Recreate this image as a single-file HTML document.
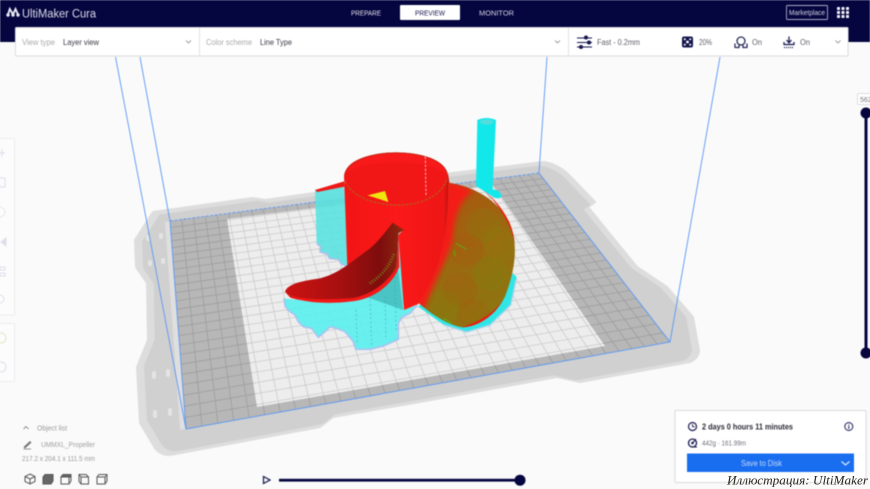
<!DOCTYPE html>
<html><head><meta charset="utf-8"><title>UltiMaker Cura</title>
<style>
html,body{margin:0;padding:0;background:#fafafa;width:870px;height:489px;overflow:hidden}
svg{display:block;font-family:"Liberation Sans",sans-serif}
#main{filter:blur(.4px)}
</style></head><body>
<svg xmlns="http://www.w3.org/2000/svg" width="870" height="489" viewBox="0 0 870 489">
<defs>
<linearGradient id="bl" gradientUnits="userSpaceOnUse" x1="520" y1="300" x2="700" y2="560"><stop offset="0" stop-color="#a85a10"/><stop offset=".5" stop-color="#9a6a10"/><stop offset="1" stop-color="#8f7410"/></linearGradient>
<linearGradient id="ld" x1="0" y1="0" x2="1" y2="0"><stop offset="0" stop-color="#cc1212"/><stop offset=".45" stop-color="#a81010"/><stop offset=".8" stop-color="#7e0d0d"/><stop offset="1" stop-color="#8f2a10"/></linearGradient>
<linearGradient id="cyl" x1="0" y1="0" x2="1" y2="0"><stop offset="0" stop-color="#f21515"/><stop offset=".5" stop-color="#fb1919"/><stop offset=".95" stop-color="#ee1616"/><stop offset="1" stop-color="#b51010"/></linearGradient>
<clipPath id="bc"><path d="M535,218 C610,228 680,270 715,330 C745,390 740,470 705,560 C680,610 630,650 580,652 C555,652 495,625 445,578 C500,500 535,420 535,218Z"/></clipPath>
<filter id="sf" x="-20%" y="-20%" width="140%" height="140%"><feGaussianBlur stdDeviation="7"/></filter>
</defs>
<g id="main">
<rect width="870" height="489" fill="#fafafa"/>
<!-- bed -->
<path d="M153,212 L253,198 L265,200 L453,173 L543,162 Q555,163 567,173 L595,202 L588,207 L637,267 L667,287 L693,317 L699,350 Q699,358 690,362 L580,382 L557,377 L420,402 L333,417 L320,427 L170,455 Q160,455 155,448 L140,423 L137,367 L148,340 L147,283 L136,267 L135,240 Z" fill="#dddddd" stroke="#dddddd" stroke-width="2" stroke-linejoin="round"/>
<path transform="translate(417,310) scale(.975) translate(-417,-310)" d="M153,212 L253,198 L265,200 L453,173 L543,162 Q555,163 567,173 L595,202 L588,207 L637,267 L667,287 L693,317 L699,350 Q699,358 690,362 L580,382 L557,377 L420,402 L333,417 L320,427 L170,455 Q160,455 155,448 L140,423 L137,367 L148,340 L147,283 L136,267 L135,240 Z" fill="#d0d0d0"/>
<polygon points="165,222 170,221 186,429 180,430" fill="#dfdfdf"/>
<g fill="#e4e4e4"><rect x="152" y="371" width="4" height="8" rx="2"/><rect x="166" y="369" width="4" height="8" rx="2"/><rect x="153" y="410" width="4" height="8" rx="2"/><rect x="168" y="408" width="4" height="8" rx="2"/><rect x="146" y="235" width="4" height="6" rx="2"/><rect x="159" y="233" width="4" height="6" rx="2"/><rect x="148" y="260" width="4" height="6" rx="2"/><rect x="161" y="258" width="4" height="6" rx="2"/></g>
<polygon points="170,221 539,173 670,342 186,429" fill="#b7b7b7"/>
<polygon points="227,219 493,185 605,346 257,407" fill="#ededed"/>
<path id="grid" d="" fill="none" stroke="#000" stroke-opacity=".14" stroke-width=".8"/>
<g fill="none" stroke="#5a97f5" stroke-width=".9">
<path d="M170,221 L539,173" stroke-dasharray="3 1.500"/>
<path d="M539,173 L670,342 L186,429 L170,221"/>
<path d="M115.500,57 L186,429 M140,57 L170,221 M547,57 L539,173 M720,57 L670,342"/>
</g>
<!-- model -->
<g transform="translate(270,110) scale(.3333)">
<path d="M622,30 Q650,18 678,30 L668,238 Q690,240 695,258 Q690,270 672,262 L618,228Z" fill="#12e8ea"/>
<ellipse cx="650" cy="36" rx="20" ry="8" fill="#55dddd"/>
<path d="M135,240 L222,222 L235,470 L215,462 L205,448 L178,445 L172,432 L150,425 L152,410 L140,400Z" fill="#58e2e0" fill-opacity=".88"/>
<path d="M140,400 L152,410 L150,425 L172,432 L178,445 L205,448 L215,462 L235,470" fill="none" stroke="#a8c0ee" stroke-width="5" stroke-linejoin="round"/>
<path d="M135,240 L222,214 L224,230 L142,246Z" fill="#ef1616"/>
<path d="M42,565 L46,590 L60,605 L75,615 L85,635 L100,650 L125,655 L145,682 L165,665 L180,650 L200,655 L225,665 L250,695 L258,718 L300,718 L340,708 L385,688 L385,640 L395,622 L420,610 L442,585 L400,600 L400,365 L385,370 L380,470 L300,550 L200,575 L100,572Z" fill="#55f0ee" fill-opacity=".88"/>
<path d="M42,565 L46,590 L60,605 L75,615 L85,635 L100,650 L125,655 L145,682 L165,665 L180,650 L200,655 L225,665 L250,695 L258,718 L300,718 L340,708 L385,688 L385,640 L395,622 L420,610 L442,585" fill="none" stroke="#a8c4f0" stroke-width="5" stroke-linejoin="round"/>
<path d="M280,558 L385,480 L400,600 Z" fill="#45bcbc" fill-opacity=".85"/>
<path d="M258,600 L262,700 M300,570 L305,705 M345,560 L348,690 M375,500 L378,660" stroke="#3fa8a8" stroke-width="2" stroke-dasharray="5 8" fill="none"/>
<path d="M445,590 L520,644 L590,666 L660,645 L722,585 L740,500 L600,400Z" fill="#2fe6e6"/>
<path d="M520,644 L590,666 L660,645 L722,585 L738,510" fill="none" stroke="#a8d0ee" stroke-width="5" stroke-dasharray="8 3"/>
<!-- cylinder -->
<path d="M222,195 L232,470 L400,360 L385,375 L402,600 L445,582 C500,500 535,420 538,218 L535,195Z" fill="url(#cyl)"/>
<ellipse cx="378" cy="205" rx="155" ry="78" fill="#f21717"/>
<path d="M222,200 C225,150 300,128 378,128 C460,128 530,150 535,200 C520,172 460,158 378,158 C300,158 235,172 222,200Z" fill="#f81a1a"/>
<path d="M225,215 C250,265 320,285 385,285 C450,285 515,260 532,205" fill="none" stroke="#8a8a18" stroke-width="3" stroke-dasharray="8 4" stroke-opacity=".75"/>
<path d="M224,195 C235,150 310,128 378,128 C450,128 525,150 533,195" fill="none" stroke="#a8280f" stroke-width="2"/>
<polygon points="293,256 345,243 355,276" fill="#efe60e"/>
<path d="M466,140 L468,260" stroke="#ffd0d0" stroke-width="2.500" stroke-dasharray="7 5"/>
<!-- right blade -->
<path d="M535,218 C610,228 680,270 715,330 C745,390 740,470 705,560 C680,610 630,650 580,652 C555,652 495,625 445,578 C500,500 535,420 535,218Z" fill="url(#bl)"/>
<g id="moire" clip-path="url(#bc)" fill="none"></g>
<g clip-path="url(#bc)"><path d="M530,215 C565,222 590,232 610,245 C570,265 552,320 548,390 C530,450 490,520 462,600 L430,590 Z" fill="#f41a12" filter="url(#sf)"/></g>
<path d="M640,240 C690,280 725,330 735,400 C720,340 690,285 640,240Z M700,570 C670,620 625,650 575,652 C630,635 670,610 700,570Z" fill="#ee1a10"/>
<path d="M552,420 L556,440 M557,400 L590,418 M520,625 L545,640" stroke="#32e010" stroke-width="2" stroke-opacity=".8" fill="none"/>
<!-- left blade -->
<path d="M45,545 C52,525 80,515 150,505 C210,490 250,450 300,415 C330,390 350,360 368,338 L402,360 L385,370 L380,470 C360,510 320,550 260,568 C190,582 90,575 60,562Z" fill="url(#ld)"/>
<path d="M45,545 C60,568 150,572 250,564 C310,552 360,510 380,470 L385,370 L388,470 C370,520 320,560 260,572 C190,584 70,582 45,545Z" fill="#f31717"/>
<path d="M300,520 C330,500 360,470 372,430" fill="none" stroke="#7d7a16" stroke-width="9" stroke-dasharray="3 5"/>
</g>

<!-- header -->
<rect width="870" height="42" fill="#05053f"/>
<g stroke="#e8e8f2" stroke-width="1.900" fill="none"><path d="M8,14.500 L9.800,9 L13,14.500 L15.500,9 L18,14.500"/></g>
<g fill="#e8e8f2"><circle cx="8" cy="15" r="1.700"/><circle cx="13" cy="15" r="1.700"/><circle cx="18" cy="15" r="1.700"/></g>
<text x="22" y="17.500" font-size="11.500" fill="#dcdcea" textLength="74" lengthAdjust="spacingAndGlyphs">UltiMaker Cura</text>
<text x="351" y="15.500" font-size="7.500" fill="#e3e3ee" textLength="30" lengthAdjust="spacingAndGlyphs">PREPARE</text>
<rect x="400" y="5" width="60" height="15" rx="1" fill="#fff"/>
<text x="415" y="15.500" font-size="7.500" fill="#15154e" textLength="30" lengthAdjust="spacingAndGlyphs">PREVIEW</text>
<text x="479" y="15.500" font-size="7.500" fill="#d5d5e5" textLength="35" lengthAdjust="spacingAndGlyphs">MONITOR</text>
<rect x="786.500" y="5.500" width="41" height="14" rx="1" fill="none" stroke="#a9a9c6" stroke-width=".9"/>
<text x="789" y="15" font-size="7.500" fill="#d5d5e5" textLength="36" lengthAdjust="spacingAndGlyphs">Marketplace</text>
<g fill="#f2f2f8"><rect x="837" y="7" width="3" height="3" rx=".6"/><rect x="841.500" y="7" width="3" height="3" rx=".6"/><rect x="846" y="7" width="3" height="3" rx=".6"/><rect x="837" y="11" width="3" height="3" rx=".6"/><rect x="841.500" y="11" width="3" height="3" rx=".6"/><rect x="846" y="11" width="3" height="3" rx=".6"/><rect x="837" y="15" width="3" height="3" rx=".6"/><rect x="841.500" y="15" width="3" height="3" rx=".6"/><rect x="846" y="15" width="3" height="3" rx=".6"/></g>

<!-- settings bar -->
<rect x="15.500" y="27.500" width="832.500" height="28.500" rx="1" fill="#fff" stroke="#dcdcdc"/>
<path d="M199.500,28 V56 M568.500,28 V56" stroke="#e2e2e2"/>
<text x="22" y="45" font-size="8" fill="#a8a8a8" textLength="33" lengthAdjust="spacingAndGlyphs">View type</text>
<text x="63" y="45" font-size="8" fill="#3a3a46" textLength="36" lengthAdjust="spacingAndGlyphs">Layer view</text>
<path d="M186,40.500 L188.500,43 L191,40.500" fill="none" stroke="#9a9a9a" stroke-width=".9"/>
<text x="206" y="45" font-size="8" fill="#a8a8a8" textLength="46" lengthAdjust="spacingAndGlyphs">Color scheme</text>
<text x="260" y="45" font-size="8" fill="#3a3a46" textLength="32" lengthAdjust="spacingAndGlyphs">Line Type</text>
<path d="M555,40.500 L557.500,43 L560,40.500" fill="none" stroke="#9a9a9a" stroke-width=".9"/>
<g fill="#15154e" stroke="#15154e">
<path d="M577,38 H592 M577,42.500 H592 M577,47 H592" stroke-width="1" fill="none"/>
<circle cx="586" cy="37.500" r="1.500"/><circle cx="589" cy="42.500" r="1.500"/><circle cx="581" cy="47" r="1.500"/>
</g>
<text x="597" y="45" font-size="8" fill="#5f5f69" textLength="43" lengthAdjust="spacingAndGlyphs">Fast - 0.2mm</text>
<rect x="682" y="36.500" width="11" height="11" rx="2" fill="#14144c"/>
<g fill="#fff"><circle cx="687.500" cy="42" r="1.400"/><circle cx="684.800" cy="39.300" r="1"/><circle cx="690.200" cy="39.300" r="1"/><circle cx="684.800" cy="44.700" r="1"/><circle cx="690.200" cy="44.700" r="1"/></g>
<text x="699" y="45" font-size="8" fill="#5f5f69" textLength="13" lengthAdjust="spacingAndGlyphs">20%</text>
<circle cx="741" cy="41" r="4" fill="none" stroke="#2a2a5c" stroke-width="1.300"/>
<path d="M735,48 V43.500 M747,48 V43.500 M735.500,47.500 H739 V45 M746.500,47.500 H743 V45" fill="none" stroke="#2a2a5c" stroke-width="1.300"/>
<text x="752" y="45" font-size="8" fill="#5f5f69" textLength="10" lengthAdjust="spacingAndGlyphs">On</text>
<path d="M789,36.500 V42.500 M786.500,40 L789,42.800 L791.500,40 M784,42 V44.500 H794 V42" fill="none" stroke="#14144c" stroke-width="1.200"/>
<path d="M784,47.500 H794" stroke="#14144c" stroke-width="1.200" stroke-dasharray="1 1"/>
<text x="800" y="45" font-size="8" fill="#5f5f69" textLength="10" lengthAdjust="spacingAndGlyphs">On</text>
<path d="M835.500,40.500 L838,43 L840.500,40.500" fill="none" stroke="#9a9a9a" stroke-width=".9"/>

<!-- left toolbars -->
<rect x="-4" y="138.500" width="18.500" height="176.500" rx="1" fill="#fcfcfc" stroke="#ececec"/>
<rect x="-4" y="323.500" width="18.500" height="58" rx="1" fill="#fcfcfc" stroke="#ececec"/>
<g fill="none" stroke="#dedeea" stroke-width="1">
<path d="M-2,153 H5 M2,149 V157"/><rect x="-1" y="178" width="6" height="9"/><circle cx="0" cy="212" r="5" stroke-dasharray="2 1"/>
<path d="M6,238 V246 L1,242Z" fill="#dedeea"/><rect x="0" y="267" width="5" height="3"/><rect x="0" y="273" width="5" height="3"/>
<circle cx="0" cy="299" r="4"/><circle cx="1" cy="338" r="5" stroke="#e2e6c4"/><circle cx="1" cy="367" r="5"/>
</g>

<!-- right layer slider -->
<rect x="857.500" y="93.500" width="14" height="11" rx="1" fill="#fff" stroke="#dedede"/>
<text x="860" y="102" font-size="7" fill="#777">562</text>
<rect x="864.500" y="113" width="3" height="240" fill="#05053f"/>
<circle cx="866" cy="113" r="5.500" fill="#05053f"/><circle cx="866" cy="353" r="5.500" fill="#05053f"/>

<!-- bottom slider -->
<path d="M263.500,476.500 L270,480 L263.500,483.500Z" fill="none" stroke="#15154e" stroke-width="1.200"/>
<rect x="279" y="478.800" width="241" height="2.800" fill="#05053f"/>
<circle cx="520" cy="480.200" r="5.500" fill="#05053f"/>

<!-- object info -->
<path d="M23.500,429 L26,426.500 L28.500,429" fill="none" stroke="#8a8a8a" stroke-width=".9"/>
<text x="37" y="430.500" font-size="7.500" fill="#9a9a9a" textLength="30" lengthAdjust="spacingAndGlyphs">Object list</text>
<path d="M24,447 L30,441.500 L31,442.500 L25,448Z M23.500,449 H31" fill="#777" stroke="#777" stroke-width=".7"/>
<text x="41" y="447" font-size="7.500" fill="#a0a0a0" textLength="54" lengthAdjust="spacingAndGlyphs">UMMXL_Propeller</text>
<text x="22" y="461" font-size="7.500" fill="#9a9a9a" textLength="73" lengthAdjust="spacingAndGlyphs">217.2 x 204.1 x 111.5 mm</text>
<g fill="none" stroke="#555" stroke-width="1">
<path d="M30,474 L35,476.500 V481.500 L30,484 L25,481.500 V476.500Z M25,476.500 L30,479 L35,476.500 M30,479 V484"/>
<path d="M43,477 L45,474.500 H53 V481 L51,484 H43Z" fill="#666"/>
<path d="M61,477 L63,474.500 H71 V481 L69,484 H61Z M61,477 H69 V484 M69,477 L71,474.500"/><path d="M63,474.500 H71 V477 H61Z" fill="#666"/>
<path d="M79,474.500 H86 L88.500,477 V484 H81 L79,481.500Z M81,477 H88.500 M81,477 V484 M79,474.500 L81,477"/>
<path d="M97,477 L99,474.500 H107 V481 L105,484 H97Z M97,477 H105 V484 M105,477 L107,474.500"/>
</g>

<!-- print panel -->
<rect x="675" y="410.500" width="191" height="72" rx="1" fill="#fff" stroke="#dadada"/>
<circle cx="692.500" cy="426.500" r="4" fill="none" stroke="#1c1c55" stroke-width="1.200"/>
<path d="M692.500,424 V426.700 H694.800" fill="none" stroke="#1c1c55" stroke-width=".9"/>
<text x="702" y="429.500" font-size="8" font-weight="700" fill="#2a2a36" textLength="91" lengthAdjust="spacingAndGlyphs">2 days 0 hours 11 minutes</text>
<circle cx="848.800" cy="426.500" r="4" fill="none" stroke="#1c1c55" stroke-width="1"/>
<path d="M848.800,425.500 V429 M848.800,424 V424.800" stroke="#1c1c55"/>
<circle cx="692.500" cy="443" r="4" fill="none" stroke="#1c1c55" stroke-width="1.300"/>
<circle cx="692.500" cy="443" r="1.300" fill="#1c1c55"/>
<path d="M693,447 H697 M696,439 L692.500,443" stroke="#1c1c55"/>
<text x="702" y="445.500" font-size="7" fill="#6f6f78" textLength="44" lengthAdjust="spacingAndGlyphs">442g · 161.99m</text>
<rect x="687" y="453.500" width="167" height="18.500" fill="#196ef0"/>
<text x="741" y="466" font-size="8" fill="#c5dafa" textLength="41" lengthAdjust="spacingAndGlyphs">Save to Disk</text>
<path d="M841.500,461.500 L845.500,465 L849.500,461.500" fill="none" stroke="#dbe8fc" stroke-width="1.200"/>
</g>
<text x="727" y="484.500" font-family="'Liberation Serif',serif" font-style="italic" font-size="13" fill="#2a2620" textLength="141" lengthAdjust="spacingAndGlyphs">Иллюстрация: UltiMaker</text>
</svg>
<script>
(function(){
var q=[[170,221],[539,173],[670,342],[186,429]];
var x0=q[0][0],y0=q[0][1],x1=q[1][0],y1=q[1][1],x2=q[2][0],y2=q[2][1],x3=q[3][0],y3=q[3][1];
var dx1=x1-x2,dx2=x3-x2,sx=x0-x1+x2-x3,dy1=y1-y2,dy2=y3-y2,sy=y0-y1+y2-y3;
var det=dx1*dy2-dx2*dy1,g=(sx*dy2-dx2*sy)/det,h=(dx1*sy-sx*dy1)/det;
var a=x1-x0+g*x1,b=x3-x0+h*x3,c=x0,d=y1-y0+g*y1,e=y3-y0+h*y3,f=y0;
function P(u,v){var w=g*u+h*v+1;return ((a*u+b*v+c)/w).toFixed(1)+','+((d*u+e*v+f)/w).toFixed(1);}
var s='',i,C=34,R=24;
for(i=1;i<C;i++)s+='M'+P(i/C,0)+'L'+P(i/C,1);
for(i=1;i<R;i++)s+='M'+P(0,i/R)+'L'+P(1,i/R);
document.getElementById('grid').setAttribute('d',s);
var m=document.getElementById('moire'),ns='http://www.w3.org/2000/svg';
var pts=[[640,345,'#35c00c'],[570,540,'#d8200e'],[660,490,'#35c00c'],[590,420,'#d8200e'],[690,400,'#6fa80c'],[520,590,'#35c00c'],[610,620,'#d8200e']];
pts.forEach(function(p){for(var r=6;r<54;r+=7){var k=document.createElementNS(ns,'circle');k.setAttribute('cx',p[0]);k.setAttribute('cy',p[1]);k.setAttribute('r',r);k.setAttribute('stroke',p[2]);k.setAttribute('stroke-opacity','.16');k.setAttribute('stroke-width','3');m.appendChild(k);}});
})();
</script>
</body></html>
